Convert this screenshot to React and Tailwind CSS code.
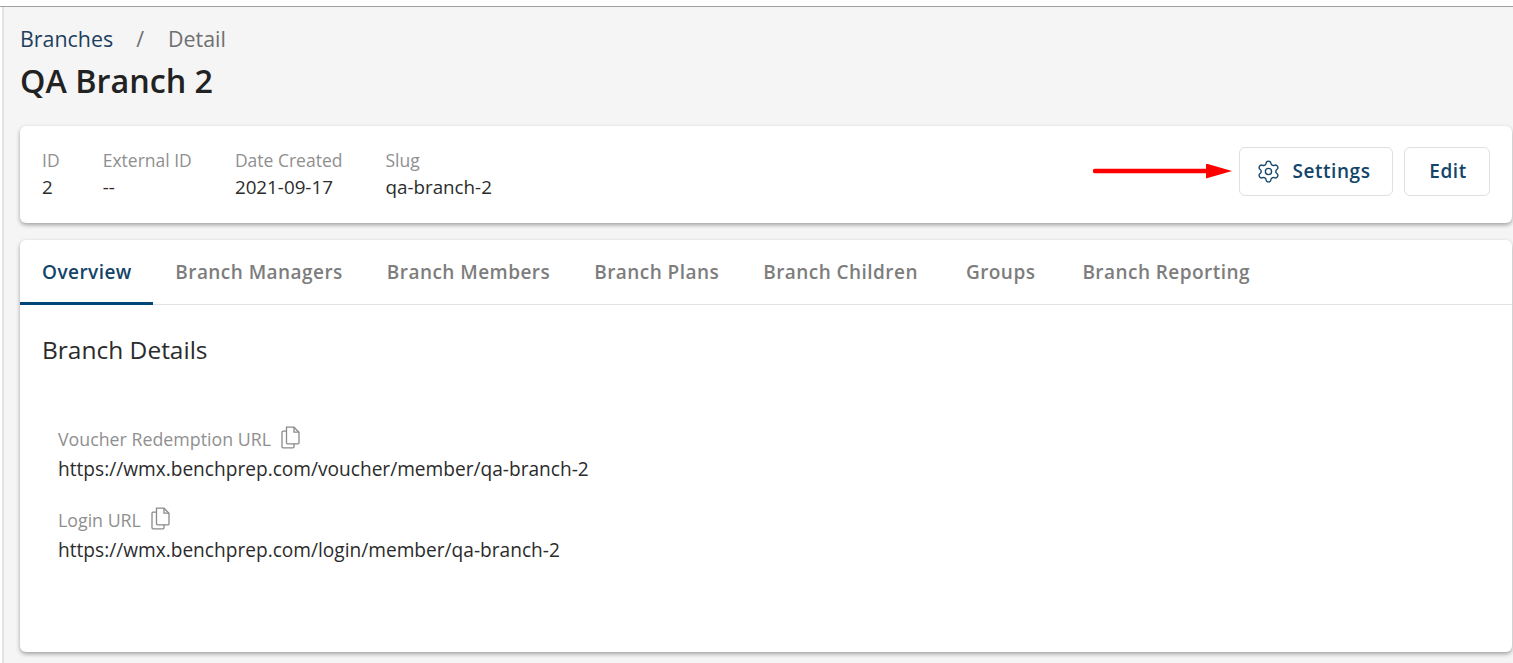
import { Settings } from "lucide-react";

const meta = [
  { label: "ID", value: "2" },
  { label: "External ID", value: "--" },
  { label: "Date Created", value: "2021-09-17" },
  { label: "Slug", value: "qa-branch-2" },
];

const tabs = ["Overview", "Branch Managers", "Branch Members", "Branch Plans", "Branch Children", "Groups", "Branch Reporting"];

const links = [
  { label: "Voucher Redemption URL", url: "https://wmx.benchprep.com/voucher/member/qa-branch-2" },
  { label: "Login URL", url: "https://wmx.benchprep.com/login/member/qa-branch-2" },
];

function CopyIcon() {
  return (
    <svg width="21" height="23" viewBox="0 0 21 23" fill="none" stroke="#8a8a8a" strokeWidth="1.3" className="-mt-1 shrink-0">
      <path d="M6.5 1.2h7.5l5 5v10.6a1 1 0 0 1-1 1H7.5a1 1 0 0 1-1-1z" />
      <path d="M14 1.2v5h5" />
      <path d="M6.5 5.2H3a1 1 0 0 0-1 1v14.6a1 1 0 0 0 1 1h10a1 1 0 0 0 1-1v-3" />
    </svg>
  );
}

function Arrow() {
  return (
    <svg width="140" height="16" viewBox="0 0 140 16" className="mr-[6px] shrink-0">
      <path d="M2 7h112" stroke="#ff0000" strokeWidth="4.4" strokeLinecap="round" />
      <path d="M113 -0.5l26 7.5-26 7.5z" fill="#ff0000" />
    </svg>
  );
}

export default function App() {
  return (
    <div className="h-[663px] overflow-hidden bg-white font-['Open_Sans',sans-serif]">
      <div className="h-[7px] border-b border-[#a0a0a0]" />
      <div className="ml-[2px] h-[656px] border-l-2 border-[#e2e2e2] bg-[#f5f5f5] pl-4 pr-px">
        <div className="flex h-[119px] flex-col">
          <div className="mt-[17px] flex h-[30px] items-center text-[21.4px] leading-[30px]">
            <span className="text-[#1d3f5e]">Branches</span>
            <span className="ml-[23px] text-[#6f6f6f]">/</span>
            <span className="ml-[24px] text-[#6f6f6f]">Detail</span>
          </div>
          <h1 className="mt-[6px] text-[32.3px] leading-[40px] font-semibold text-[#222222]">QA Branch 2</h1>
        </div>

        <div className="flex h-[97px] items-center justify-between rounded-md bg-white px-[22px] shadow-[0_2px_4px_rgba(0,0,0,0.35)]">
          <div className="-mt-[2px] flex gap-[43.1px]">
            {meta.map((item) => (
              <div key={item.label} className="leading-[27px]">
                <div className="text-[17.5px] text-[#8f8f8f]">{item.label}</div>
                <div className="text-[18.8px] text-[#2b2b2b]">{item.value}</div>
              </div>
            ))}
          </div>
          <div className="mb-[6px] flex items-center">
            <Arrow />
            <button className="flex h-[49px] w-[154px] items-center justify-center gap-[12px] rounded-md border border-[#e0e0e0] pr-[6px] text-[19px] font-semibold tracking-[0.55px] text-[#134469]">
              <Settings size={25} strokeWidth={1.3} />
              Settings
            </button>
            <button className="ml-[11px] h-[49px] w-[86px] rounded-md border border-[#e0e0e0] pl-[2px] text-[19px] font-semibold tracking-[0.55px] text-[#134469]">
              Edit
            </button>
          </div>
        </div>

        <div className="mt-[17px] h-[412px] rounded-md bg-white shadow-[0_2px_4px_rgba(0,0,0,0.35)]">
          <div className="flex h-[65px] border-b border-[#e2e2e2]">
            {tabs.map((tab, i) => (
              <div
                key={tab}
                className={
                  i === 0
                    ? "flex h-[65px] items-center border-b-[3px] border-[#004777] pt-[3px] pr-[21.5px] pl-[22px] text-[19px] font-semibold tracking-[0.45px] text-[#134469]"
                    : tab === "Groups"
                      ? "mr-[3px] ml-[4px] flex h-[65px] items-center pr-[22px] pb-[1px] pl-[22px] text-[19px] font-semibold tracking-[0.45px] text-[#7d7d7d]"
                      : "flex h-[65px] items-center pr-[22px] pb-[1px] pl-[22px] text-[19px] font-semibold tracking-[0.45px] text-[#7d7d7d]"
                }
              >
                {tab}
              </div>
            ))}
          </div>
          <div className="px-[22px]">
            <h2 className="mt-[28px] text-[24.5px] leading-[34px] text-[#2b2b2b]">Branch Details</h2>
            <div className="mt-[58px] flex flex-col gap-[23px] pl-4">
              {links.map((link) => (
                <div key={link.label} className="leading-[28px]">
                  <div className="flex items-center gap-[9px] text-[17.8px] text-[#8f8f8f]">
                    {link.label}
                    <CopyIcon />
                  </div>
                  <div className="mt-[2px] text-[19.12px] text-[#2b2b2b]">{link.url}</div>
                </div>
              ))}
            </div>
          </div>
        </div>
      </div>
    </div>
  );
}
